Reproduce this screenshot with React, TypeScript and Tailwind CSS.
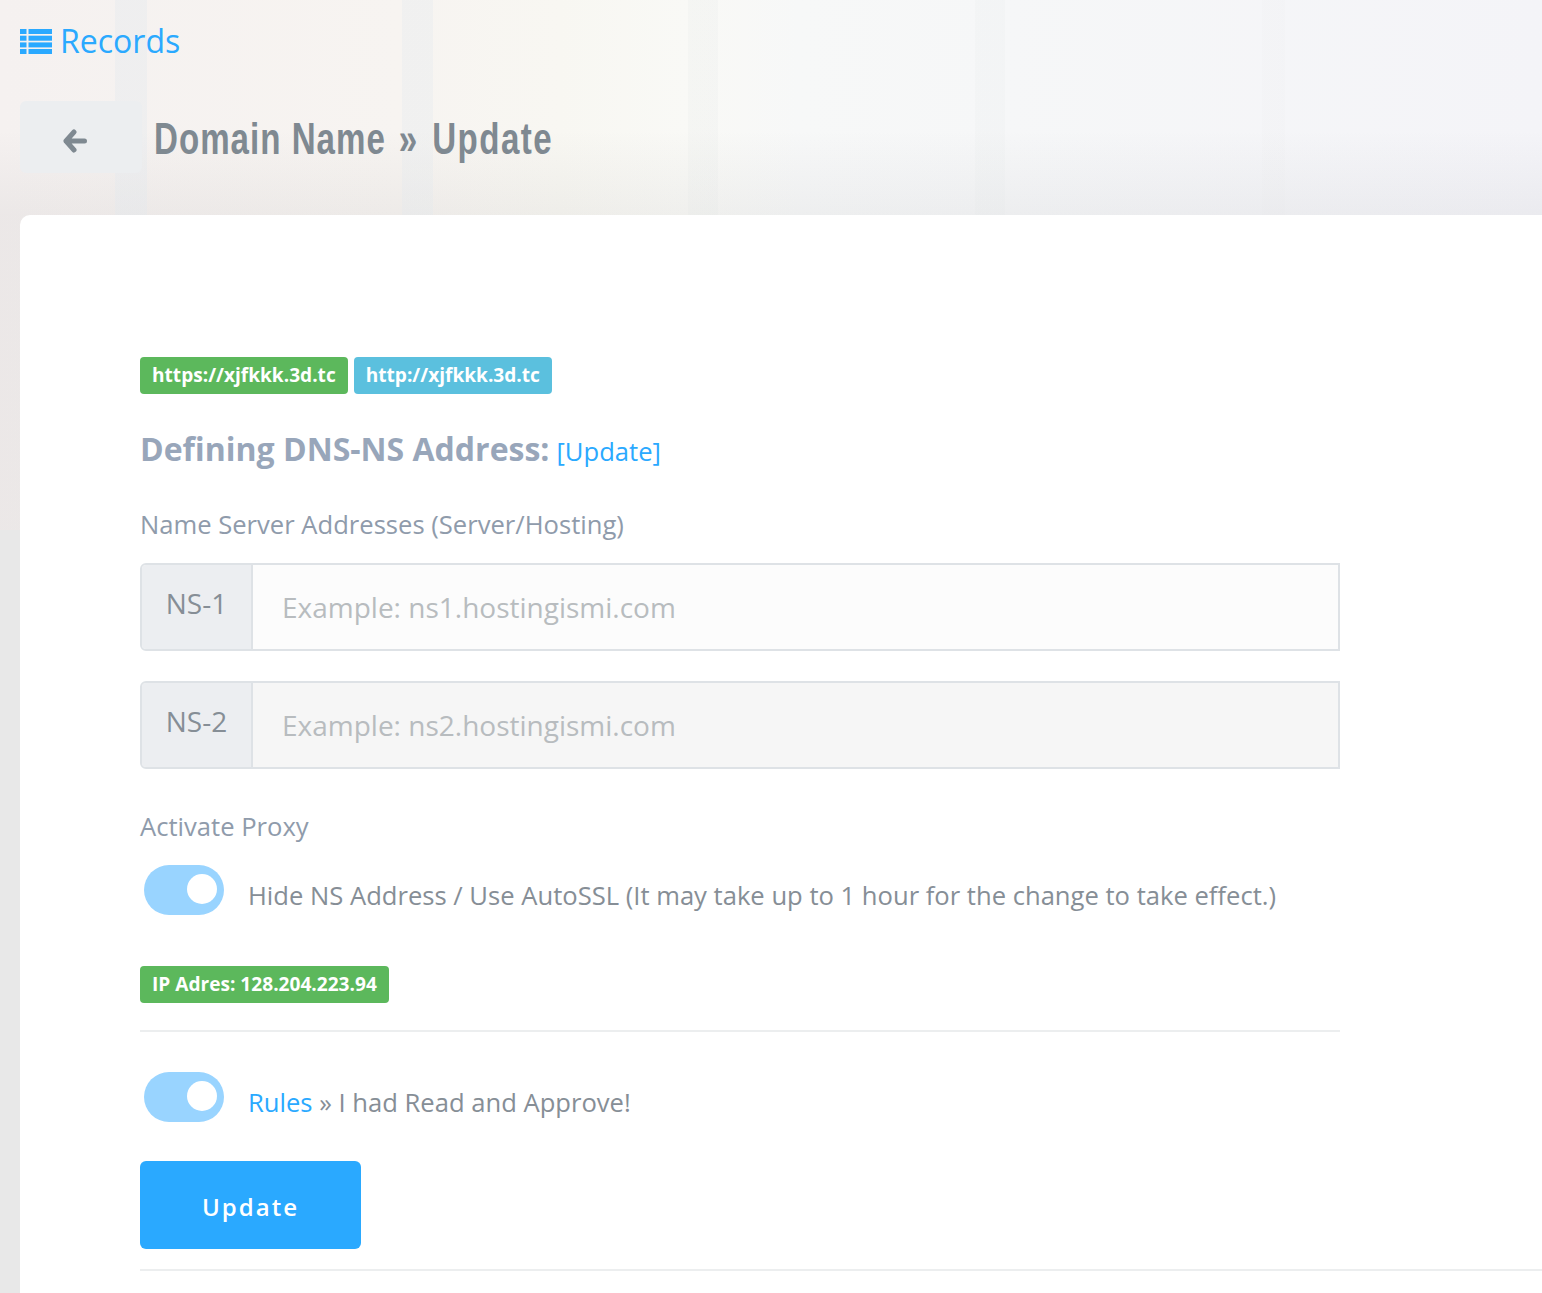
function Toggle() {
  return (
    <div className="ml-1 flex h-[50px] w-20 shrink-0 items-center justify-end rounded-[25px] bg-[#99d4ff] pr-[7px]">
      <div className="mb-[2px] h-[30px] w-[30px] rounded-full bg-white" />
    </div>
  );
}

function Badge({ color, children }: { color: string; children: React.ReactNode }) {
  return (
    <span className={`inline-block h-[37px] rounded-[4px] px-3 text-[19.1px] leading-[36px] font-bold whitespace-nowrap text-white ${color}`}>
      {children}
    </span>
  );
}

function NsField({ label, placeholder, bg }: { label: string; placeholder: string; bg: string }) {
  return (
    <div className={`flex h-[88px] w-[1200px] overflow-hidden rounded-l-[6px] border-2 border-[#dee2e6] ${bg}`}>
      <div className="flex w-[111px] shrink-0 items-center justify-center border-r-2 border-[#dee2e6] bg-[#eceef1] pb-[8px] text-[28px] text-[#868e96]">
        {label}
      </div>
      <input
        readOnly
        placeholder={placeholder}
        className="h-full min-w-0 flex-1 bg-transparent pl-[29px] text-[28px] outline-none placeholder:text-[#b8bcbf]"
      />
    </div>
  );
}

export default function App() {
  return (
    <div className="h-[1293px] overflow-hidden bg-[linear-gradient(180deg,transparent_530px,#e8e8e8_530px),linear-gradient(90deg,transparent_115px,rgba(225,232,238,0.35)_115px,rgba(225,232,238,0.35)_147px,transparent_147px,transparent_402px,rgba(225,232,238,0.3)_402px,rgba(225,232,238,0.3)_433px,transparent_433px,transparent_688px,rgba(220,225,225,0.15)_688px,rgba(220,225,225,0.15)_718px,transparent_718px,transparent_975px,rgba(220,225,225,0.12)_975px,rgba(220,225,225,0.12)_1005px,transparent_1005px,transparent_1262px,rgba(225,225,225,0.08)_1262px,rgba(225,225,225,0.08)_1285px,transparent_1285px),linear-gradient(180deg,transparent_130px,rgba(60,60,70,0.05)_215px,rgba(60,60,70,0.05)_100%),linear-gradient(90deg,#f5f1f0_0px,#f7f4f1_400px,#f8f7f2_560px,#f9f9f6_688px,#f7f8f8_800px,#f6f7f8_1000px,#f4f4f8_1542px)] font-['Open_Sans',sans-serif] text-[#868e96]">
      <div className="flex h-[101px] items-start pt-[17px] pl-5">
        <a className="flex items-center gap-2 text-[32px] leading-[48px] font-normal text-[#2aa9ff]">
          <svg width="32" height="25" viewBox="0 0 32 25" fill="currentColor">
            <rect x="0" y="0" width="6.5" height="5" />
            <rect x="8.5" y="0" width="23.5" height="5" />
            <rect x="0" y="6.7" width="6.5" height="5" />
            <rect x="8.5" y="6.7" width="23.5" height="5" />
            <rect x="0" y="13.4" width="6.5" height="5" />
            <rect x="8.5" y="13.4" width="23.5" height="5" />
            <rect x="0" y="20" width="6.5" height="5" />
            <rect x="8.5" y="20" width="23.5" height="5" />
          </svg>
          Records
        </a>
      </div>
      <div className="flex h-[114px] items-start pl-5">
        <div className="flex h-[72px] w-[122px] items-center justify-center rounded-[6px] bg-[#eceef0] pt-[8px] pr-[12px] text-[#7f8991]">
          <svg width="24" height="24" viewBox="0 0 24 24" fill="none" stroke="currentColor" strokeWidth="5" strokeLinecap="round" strokeLinejoin="round">
            <path d="M11 3 L3 12 L11 21 M3 12 H21.5" />
          </svg>
        </div>
        <h1 className="ml-3 origin-left scale-x-[0.735] font-['Liberation_Sans',sans-serif] text-[45px] leading-[75px] font-bold tracking-[2px] whitespace-nowrap text-[#7f8991]">
          <span className="tracking-[1.4px]">Domain Name</span> <span className="ml-[3px]">»</span>{" "}
          <span className="ml-[4px]">Update</span>
        </h1>
      </div>
      <div className="ml-5 h-[1078px] rounded-tl-[10px] bg-white pt-[142px] pl-[120px]">
        <div className="flex gap-[6px]">
          <Badge color="bg-[#5cb85c]">https://xjfkkk.3d.tc</Badge>
          <Badge color="bg-[#5bc0de]">http://xjfkkk.3d.tc</Badge>
        </div>
        <div className="mt-[31px] flex items-baseline gap-[7px] leading-[48px]">
          <span className="text-[32px] font-bold text-[#98a6ba]">Defining DNS-NS Address:</span>
          <a className="text-[25.6px] text-[#2aa9ff]">[Update]</a>
        </div>
        <div className="mt-[29px] text-[25.6px] leading-[40px] text-[#8f9bab]">
          Name Server Addresses (Server/Hosting)
        </div>
        <div className="mt-[18px] flex flex-col gap-[30px]">
          <NsField label="NS-1" placeholder="Example: ns1.hostingismi.com" bg="bg-[#fcfcfc]" />
          <NsField label="NS-2" placeholder="Example: ns2.hostingismi.com" bg="bg-[#f6f6f6]" />
        </div>
        <div className="mt-[38px] text-[25.6px] leading-[40px] text-[#8f9bab]">Activate Proxy</div>
        <div className="mt-[18px] flex h-[50px] items-center gap-6">
          <Toggle />
          <span className="pt-[12px] text-[25.6px] leading-[40px] whitespace-nowrap">
            Hide NS Address / Use AutoSSL (It may take up to 1 hour for the change to take effect.)
          </span>
        </div>
        <div className="mt-[51px]">
          <Badge color="bg-[#5cb85c]">IP Adres: 128.204.223.94</Badge>
        </div>
        <div className="mt-[27px] h-[2px] w-[1200px] bg-[#eceeef]" />
        <div className="mt-[40px] flex h-[50px] items-center gap-6">
          <Toggle />
          <span className="pt-[12px] text-[25.6px] leading-[40px] whitespace-nowrap">
            <a className="text-[#2aa9ff]">Rules</a> » I had Read and Approve!
          </span>
        </div>
        <button className="mt-[39px] block h-[88px] w-[221px] rounded-[6px] bg-[#2aa9ff] pt-[4px] text-[24px] font-semibold tracking-[2px] text-white">
          Update
        </button>
        <div className="mt-[20px] h-[2px] bg-[#eceeef]" />
      </div>
    </div>
  );
}
